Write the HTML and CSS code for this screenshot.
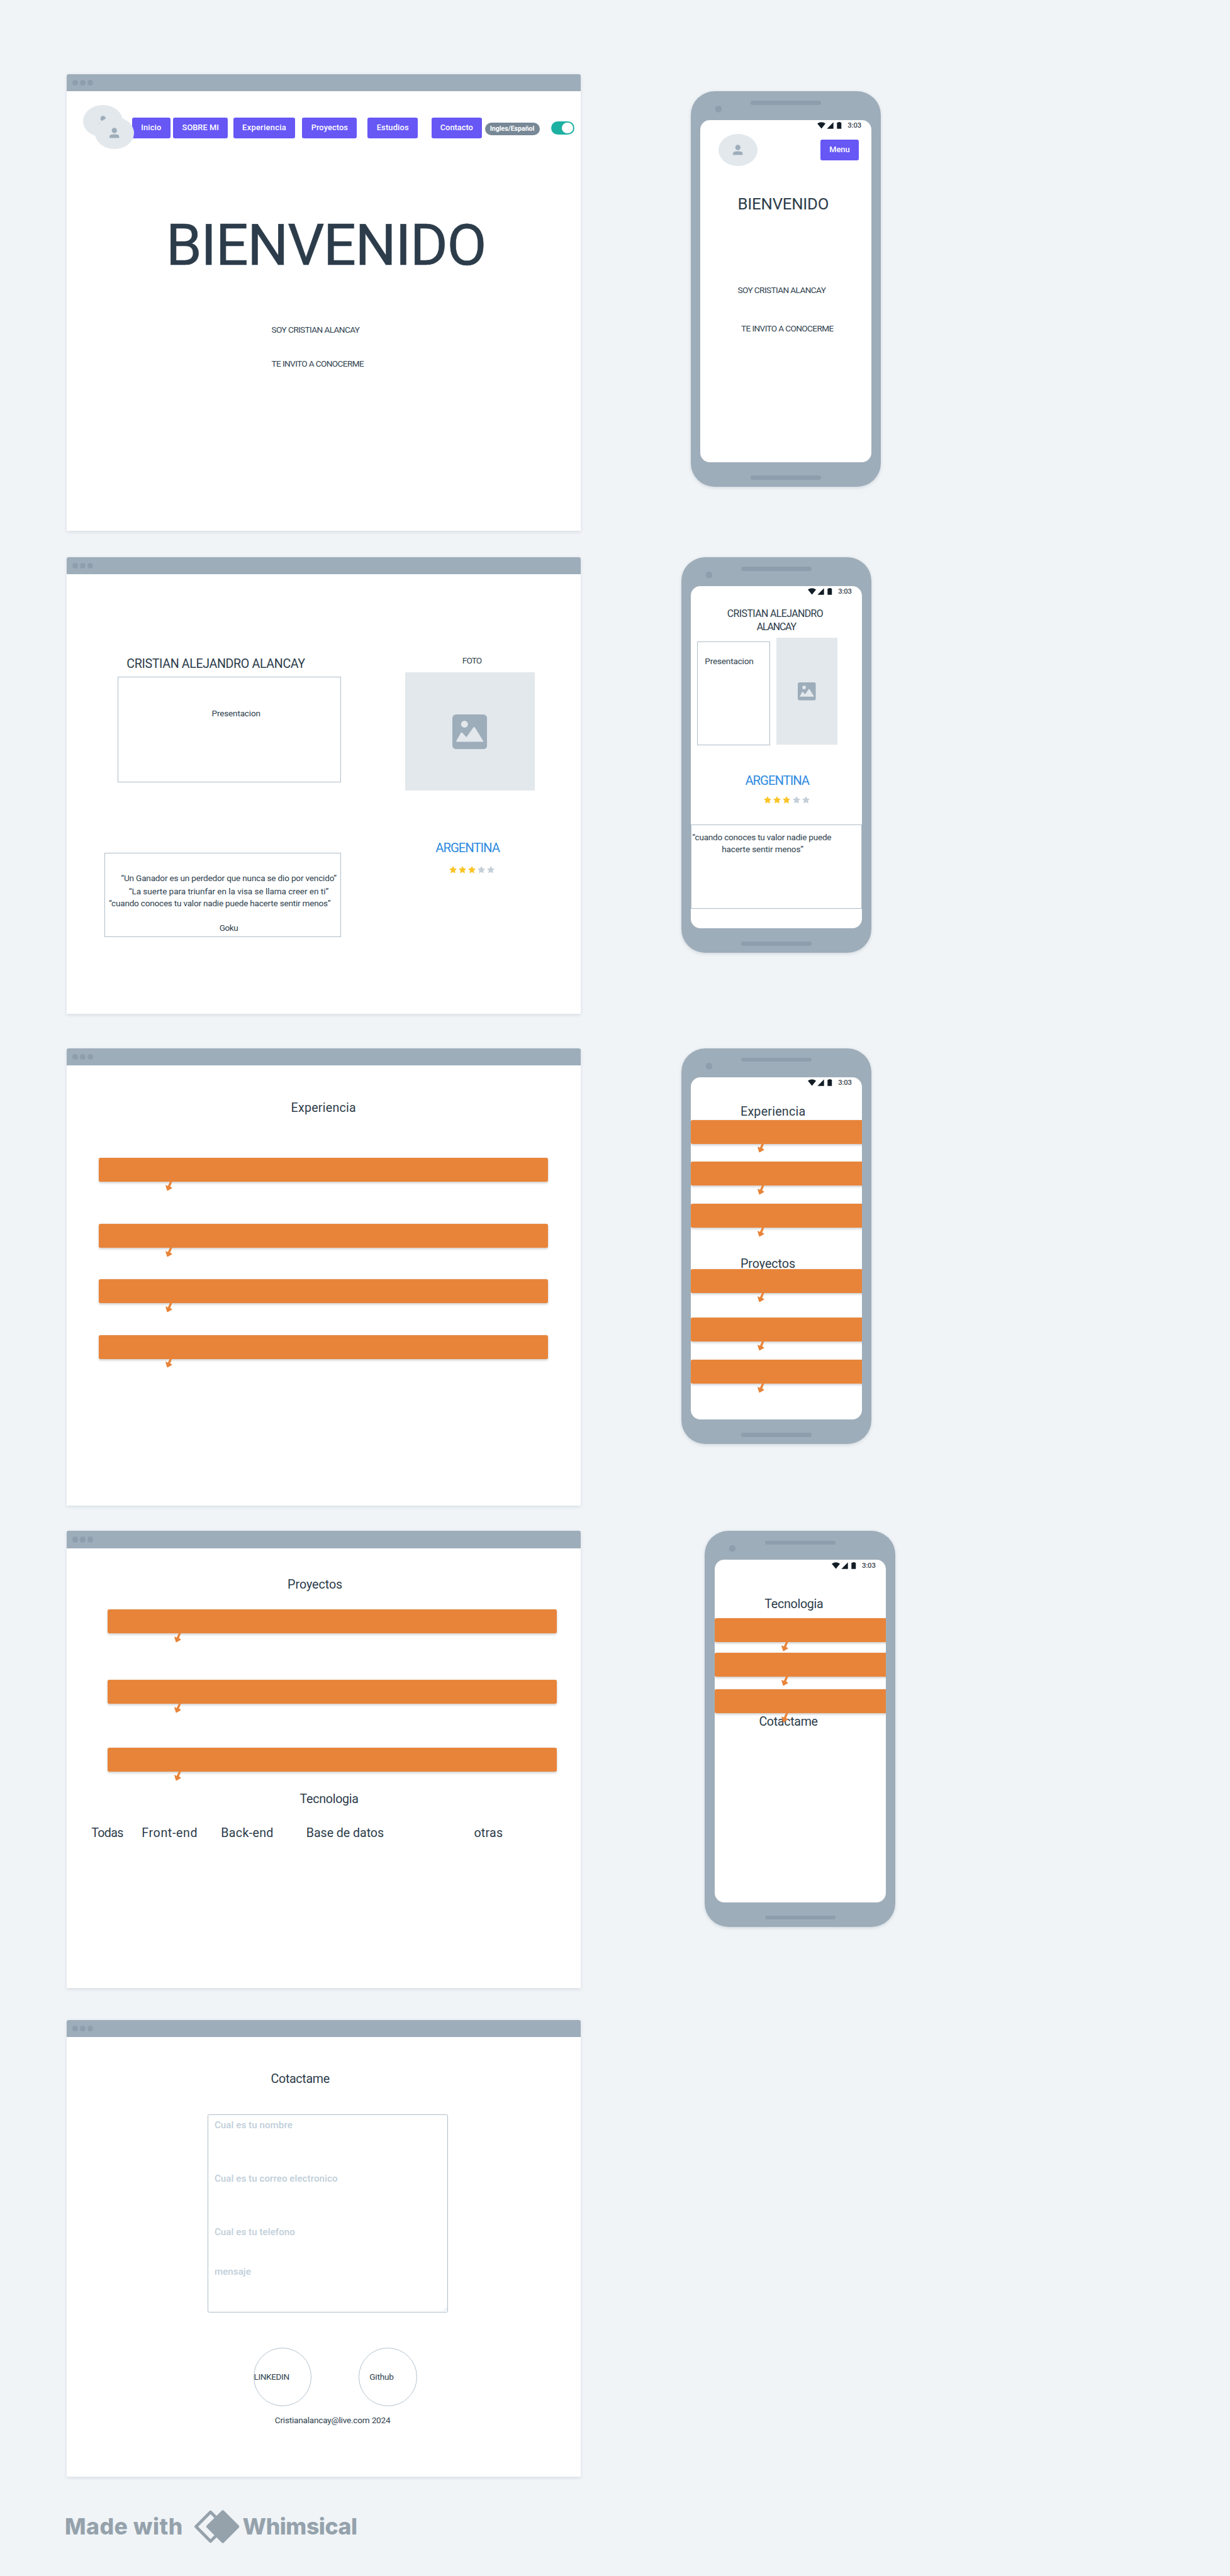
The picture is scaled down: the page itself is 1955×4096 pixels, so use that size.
FILE: index.html
```html
<!DOCTYPE html>
<html lang="es">
<head>
<meta charset="utf-8">
<title>Wireframe portfolio</title>
<link rel="stylesheet" href="styles.css">
</head>
<body>
<svg class="defs" aria-hidden="true">
  <symbol id="arrow" viewBox="0 0 14.4 19.4"><path fill="#e88439" d="M9.3 0H14L9.9 10.3l3.7 2.3q1 .7 0 1.4l-8.8 4.9q-1.200.5-1.600-.7L.1 8Q-.1 6.700 1.200 7.200l4 1.700z"/></symbol>
  <symbol id="star" viewBox="0 0 16 16"><path d="M8 .6q.5 0 .8.6l1.700 3.900 4.300.4q1.100.2.4 1.100L12 9.500l1 4.600q.1 1.100-.9.700L8 12.600l-4.100 2.200q-1 .4-.9-.7l1-4.600L.8 6.600q-.7-.9.400-1.100l4.300-.4 1.700-3.900Q7.500.6 8 .6z"/></symbol>
  <symbol id="status" viewBox="0 0 52 15"><path fill="#121d26" d="M0 3.300Q8.700-2.600 17.300 3.300L8.700 13.900zM34 .3v14H20.300zM44.500 0h3.600v1h2q.5 0 .5.500v12.800h-9.200V1.500q0-.5.500-.5h2.600z"/></symbol>
  <symbol id="person" viewBox="0 0 20.600 22"><ellipse fill="#9eadba" cx="10.300" cy="6" rx="5.500" ry="5.700"/><path fill="#9eadba" d="M0 21.800v-3.300q0-4.600 10.300-4.600t10.300 4.600v3.300z"/></symbol>
  <symbol id="picture" viewBox="0 0 73 73"><rect fill="#9eadba" width="73" height="73" rx="8"/><circle fill="#e2e8ec" cx="25.500" cy="20.500" r="7.200"/><path fill="#e2e8ec" d="M8.300 56L18 38.500q1.300-1.800 2.700 0L29.500 48 44.300 27.200q1.500-1.800 2.900 0L65 56q.6 1.500-.8 1.500H9Q7.600 57.500 8.300 56z"/></symbol>
</svg>
<main class="board">
  <div class="desktop">
    <section class="window w1">
      <header class="bar"><i></i><i></i><i></i></header>
      <div class="body">
        <nav class="nav">
          <div class="avatars">
            <div class="avatar back"><svg><use href="#person"/></svg></div>
            <div class="avatar front"><svg><use href="#person"/></svg></div>
          </div>
          <a class="btn b-inicio">Inicio</a>
          <a class="btn b-sobre">SOBRE MI</a>
          <a class="btn b-exp">Experiencia</a>
          <a class="btn b-proy">Proyectos</a>
          <a class="btn b-est">Estudios</a>
          <a class="btn b-cont">Contacto</a>
          <span class="pill">Ingles/Español</span>
          <span class="toggle"><i></i></span>
        </nav>
        <h1 class="hero">BIENVENIDO</h1>
        <p class="s soy">SOY CRISTIAN ALANCAY</p>
        <p class="s invito">TE INVITO A CONOCERME</p>
      </div>
    </section>

    <section class="window w2">
      <header class="bar"><i></i><i></i><i></i></header>
      <div class="body split">
        <div class="col about">
          <h2 class="h name">CRISTIAN ALEJANDRO ALANCAY</h2>
          <div class="box intro"><p class="s present">Presentacion</p></div>
          <div class="box quotes">
            <p class="s q1">“Un Ganador es un perdedor que nunca se dio por vencido”</p>
            <p class="s q2">“La suerte para triunfar en la visa se llama creer en ti”</p>
            <p class="s q3">“cuando conoces tu valor nadie puede hacerte sentir menos”</p>
            <p class="s q4">Goku</p>
          </div>
        </div>
        <div class="col photo">
          <p class="s foto">FOTO</p>
          <div class="image"><svg><use href="#picture"/></svg></div>
          <p class="country">ARGENTINA</p>
          <div class="stars"><svg><use href="#star"/></svg><svg><use href="#star"/></svg><svg><use href="#star"/></svg><svg class="off"><use href="#star"/></svg><svg class="off"><use href="#star"/></svg></div>
        </div>
      </div>
    </section>

    <section class="window w3">
      <header class="bar"><i></i><i></i><i></i></header>
      <div class="body">
        <h2 class="h exp">Experiencia</h2>
        <div class="strip"><svg><use href="#arrow"/></svg></div>
        <div class="strip"><svg><use href="#arrow"/></svg></div>
        <div class="strip"><svg><use href="#arrow"/></svg></div>
        <div class="strip"><svg><use href="#arrow"/></svg></div>
      </div>
    </section>

    <section class="window w4">
      <header class="bar"><i></i><i></i><i></i></header>
      <div class="body">
        <h2 class="h proy">Proyectos</h2>
        <div class="strip"><svg><use href="#arrow"/></svg></div>
        <div class="strip"><svg><use href="#arrow"/></svg></div>
        <div class="strip"><svg><use href="#arrow"/></svg></div>
        <h2 class="h tec">Tecnologia</h2>
        <div class="tabs">
          <span class="h t-todas">Todas</span>
          <span class="h t-front">Front-end</span>
          <span class="h t-back">Back-end</span>
          <span class="h t-base">Base de datos</span>
          <span class="h t-otras">otras</span>
        </div>
      </div>
    </section>

    <section class="window w5">
      <header class="bar"><i></i><i></i><i></i></header>
      <div class="body">
        <h2 class="h cot">Cotactame</h2>
        <div class="box form">
          <p>Cual es tu nombre</p>
          <p>Cual es tu correo electronico</p>
          <p>Cual es tu telefono</p>
          <p class="msg">mensaje</p>
          <svg class="grip" viewBox="0 0 10 10"><path d="M1 9l8-8M5.500 9L9 5.500" fill="none" stroke="#c5d2de" stroke-width="1"/></svg>
        </div>
        <div class="social">
          <div class="circle linkedin"><p class="s">LINKEDIN</p></div>
          <div class="circle github"><p class="s">Github</p></div>
        </div>
        <p class="s mail">Cristianalancay@live.com 2024</p>
      </div>
    </section>

    <footer class="credit">
      <span class="made">Made with</span>
      <svg class="logo" viewBox="0 0 96 70"><path d="M4.600 35L35.200 4.300 65.800 35 35.200 65.700z" fill="none" stroke="#95a2ac" stroke-width="6.300" stroke-linejoin="round"/><path d="M30 35L61 4 92 35 61 66z" fill="#95a2ac" stroke="#95a2ac" stroke-width="7" stroke-linejoin="round"/></svg>
      <span class="brand">Whimsical</span>
    </footer>
  </div>

  <div class="mobile">
    <section class="phone p1">
      <div class="screen">
        <div class="status"><svg><use href="#status"/></svg><span>3:03</span></div>
        <div class="top">
          <div class="avatar"><svg><use href="#person"/></svg></div>
          <a class="btn menu">Menu</a>
        </div>
        <h1 class="welcome">BIENVENIDO</h1>
        <p class="s soy">SOY CRISTIAN ALANCAY</p>
        <p class="s invito">TE INVITO A CONOCERME</p>
      </div>
    </section>

    <section class="phone p2">
      <div class="screen">
        <div class="status"><svg><use href="#status"/></svg><span>3:03</span></div>
        <p class="m n1">CRISTIAN ALEJANDRO</p>
        <p class="m n2">ALANCAY</p>
        <div class="pair">
          <div class="box intro"><p class="s present">Presentacion</p></div>
          <div class="image"><svg><use href="#picture"/></svg></div>
        </div>
        <p class="country">ARGENTINA</p>
        <div class="stars"><svg><use href="#star"/></svg><svg><use href="#star"/></svg><svg><use href="#star"/></svg><svg class="off"><use href="#star"/></svg><svg class="off"><use href="#star"/></svg></div>
        <div class="box quotes">
          <p class="s l1">“cuando conoces tu valor nadie puede</p>
          <p class="s l2">hacerte sentir menos”</p>
        </div>
      </div>
    </section>

    <section class="phone p3">
      <div class="screen">
        <div class="status"><svg><use href="#status"/></svg><span>3:03</span></div>
        <h2 class="h exp">Experiencia</h2>
        <div class="strip"><svg><use href="#arrow"/></svg></div>
        <div class="strip"><svg><use href="#arrow"/></svg></div>
        <div class="strip"><svg><use href="#arrow"/></svg></div>
        <h2 class="h proy">Proyectos</h2>
        <div class="strip"><svg><use href="#arrow"/></svg></div>
        <div class="strip"><svg><use href="#arrow"/></svg></div>
        <div class="strip"><svg><use href="#arrow"/></svg></div>
      </div>
    </section>

    <section class="phone p4">
      <div class="screen">
        <div class="status"><svg><use href="#status"/></svg><span>3:03</span></div>
        <h2 class="h tec">Tecnologia</h2>
        <div class="strip"><svg><use href="#arrow"/></svg></div>
        <div class="strip"><svg><use href="#arrow"/></svg></div>
        <div class="strip"><svg><use href="#arrow"/></svg></div>
        <h2 class="h cot">Cotactame</h2>
      </div>
    </section>
  </div>
</main>
</body>
</html>
```
FILE: styles.css
```css
/* 1rem is ten units of the board; the board is 258.4rem wide */
html { font-size: 7.56579px; background: #f0f4f7; }
* { box-sizing: border-box; }
body, h1, h2, p { margin: 0; font-weight: 400; }
body { font-family: Roboto, "Liberation Sans", sans-serif; color: #2c3c4a; background: #f0f4f7; }
svg { display: block; flex: none; overflow: visible; }
.defs { display: none; }

.board { display: flex; align-items: flex-start; width: 258.4rem; height: 541.3rem; overflow: hidden; }
.desktop { width: 108rem; margin-left: 13.95rem; flex: none; padding-top: 15.62rem; }
.mobile { flex: none; margin-left: 21.15rem; padding-top: 19.16rem; }

/* Browser windows */
.window { height: 96rem; background: #fff; border-radius: .4rem .4rem 0 0; box-shadow: 0 .2rem .7rem rgba(60, 80, 100, .13); }
.w2 { margin-top: 5.43rem; }
.w3 { margin-top: 7.32rem; }
.w4 { margin-top: 5.4rem; }
.w5 { margin-top: 6.73rem; }
.bar { display: flex; align-items: center; gap: .4rem; height: 3.6rem; padding-left: 1.2rem; background: #9eadba; border-radius: .4rem .4rem 0 0; }
.bar i { width: 1.2rem; height: 1.2rem; border-radius: 50%; background: #8f9eac; }
.body, .col, .screen, .quotes { display: flex; flex-direction: column; align-items: flex-start; }
.body.split { flex-direction: row; }
.col > *, .body > *, .screen > * { flex: none; }

/* Text sizes */
.s, .h, .m, .country, .hero, .welcome { position: relative; top: .05rem; line-height: 1; white-space: nowrap; }
.s, .h, .m, .country, .hero, .welcome { position: static; }
.s { font-size: 1.8rem; color: #2f3f4e; }
.m { font-size: 2.1rem; }
.h { font-size: 2.6rem; }
.country { font-size: 2.7rem; color: #2f8be0; letter-spacing: -.143rem; }

/* Shared pieces */
.btn { display: flex; align-items: center; justify-content: center; flex: none; height: 4.25rem; border-radius: .4rem; background: #6757f5; color: #fff; font-size: 1.7rem; font-weight: 500; line-height: 1; white-space: nowrap; }
.avatar { display: flex; justify-content: center; width: 8.25rem; height: 6.75rem; padding-top: 2.25rem; border-radius: 50%; background: #e2e8ec; }
.avatar svg { width: 2.06rem; height: 2.2rem; }
.box { border: .2rem solid #aebdc9; }
.image { display: flex; align-items: center; justify-content: center; background: #e2e8ec; }
.stars { display: flex; gap: .4rem; color: #fbc427; }
.stars svg { width: 1.6rem; height: 1.6rem; fill: currentColor; }
.stars .off { color: #c5cfd8; }
.strip { position: relative; height: 5.02rem; border-radius: .35rem; background: #e88439; box-shadow: 0 .2rem .5rem rgba(0, 0, 0, .2); }
.strip svg { position: absolute; left: 14rem; top: 5rem; width: 1.44rem; height: 1.94rem; }

/* Home window */
.nav { display: flex; align-items: center; height: 9.24rem; margin: 2.88rem 0 0 3.53rem; }
.nav .btn { margin-top: .37rem; }
.avatars { position: relative; z-index: 1; width: 10.67rem; height: 9.24rem; margin-right: -.39rem; flex: none; }
.front { position: absolute; right: 0; bottom: 0; }
.b-inicio { width: 8rem; letter-spacing: .02rem; }
.b-sobre { width: 11.5rem; margin-left: .62rem; }
.b-exp { width: 12.93rem; margin-left: 1.18rem; letter-spacing: .04rem; }
.b-proy { width: 11.5rem; margin-left: 1.5rem; letter-spacing: .01rem; }
.b-est { width: 10.5rem; margin-left: 2.27rem; letter-spacing: .02rem; }
.b-cont { width: 10.63rem; margin-left: 2.87rem; }
.pill { display: flex; align-items: center; justify-content: center; flex: none; width: 11.5rem; height: 2.65rem; margin: .74rem 0 0 .6rem; border-radius: 1.33rem; background: #788896; color: #fff; font-size: 1.4rem; font-weight: 700; line-height: 1; }
.toggle { display: flex; align-items: center; justify-content: flex-end; flex: none; width: 4.78rem; height: 2.84rem; margin: .4rem 0 0 2.49rem; padding-right: .25rem; border-radius: 1.42rem; background: #1db1a1; }
.toggle i { width: 2.3rem; height: 2.3rem; border-radius: 50%; background: #fff; }
.hero { margin: 14.18rem 0 0 20.91rem; font-size: 12.1rem; letter-spacing: -.192rem; -webkit-text-stroke: .08rem currentColor; }
.soy { letter-spacing: -.08rem; }
.invito { letter-spacing: -.083rem; }
.w1 .soy { margin: 10.87rem 0 0 43.1rem; }
.w1 .invito { margin: 5.31rem 0 0 43.1rem; }

/* About window */
.about { width: 57.67rem; }
.name { margin: 17.57rem 0 0 12.66rem; letter-spacing: -.05rem; }
.w2 .intro { width: 46.93rem; height: 22.28rem; margin: 1.37rem 0 0 10.74rem; padding: 6.77rem 0 0 19.66rem; }
.present { letter-spacing: -.026rem; }
.w2 .quotes { width: 49.71rem; height: 17.75rem; margin: 14.74rem 0 0 7.96rem; }
.q1 { margin: 4.4rem 0 0 3.38rem; letter-spacing: -.026rem; }
.q2 { margin: .99rem 0 0 5.02rem; letter-spacing: -.009rem; }
.q3 { margin: .62rem 0 0 .81rem; letter-spacing: -.031rem; }
.q4 { margin: 3.46rem 0 0 24.04rem; letter-spacing: -.055rem; }
.foto { margin: 17.4rem 0 0 25.5rem; letter-spacing: -.12rem; }
.w2 .image { width: 27.22rem; height: 24.88rem; margin: 1.45rem 0 0 13.5rem; }
.w2 .image svg { width: 7.3rem; height: 7.3rem; }
.w2 .country { margin: 10.67rem 0 0 19.88rem; }
.w2 .stars { margin: 2.4rem 0 0 22.73rem; }

/* Experience window */
.exp { letter-spacing: .031rem; }
.w3 .exp { margin: 7.57rem 0 0 47.19rem; }
.w3 .strip { width: 94.36rem; margin: 6.65rem 0 0 6.8rem; }
.w3 .strip:nth-child(2) { margin-top: 9.23rem; }
.w3 .strip:nth-child(3) { margin-top: 8.83rem; }

/* Projects window */
.proy { letter-spacing: -.005rem; }
.tec { letter-spacing: -.038rem; }
.w4 .proy { margin: 6.35rem 0 0 46.47rem; }
.w4 .strip { width: 94.43rem; margin: 3.95rem 0 0 8.6rem; }
.w4 .strip:nth-child(3) { margin-top: 9.78rem; }
.w4 .strip:nth-child(4) { margin-top: 9.21rem; }
.w4 .tec { margin: 4.49rem 0 0 49.04rem; }
.tabs { display: grid; grid-template-columns: 10.59rem 16.64rem 17.93rem 35.24rem auto; margin: 4.59rem 0 0 5.24rem; }
.t-todas { letter-spacing: -.092rem; }
.t-front { letter-spacing: .08rem; }
.t-back { letter-spacing: .043rem; }
.t-base { letter-spacing: -.009rem; }
.t-otras { letter-spacing: .031rem; }

/* Contact window */
.cot { letter-spacing: -.043rem; }
.w5 .cot { margin: 7.61rem 0 0 42.96rem; }
.form { position: relative; width: 50.53rem; height: 41.7rem; margin: 6.01rem 0 0 29.64rem; padding: .9rem 0 0 1.34rem; border-radius: .3rem; color: #c0ced9; font-size: 2rem; font-weight: 500; line-height: 2.8rem; letter-spacing: .008rem; }
.form p { margin-bottom: 8.4rem; font-weight: 500; }
.form .msg { margin: -2.8rem 0 0; }
.grip { position: absolute; right: 0; bottom: 0; width: 1rem; height: 1rem; }
.social { display: flex; gap: 9.89rem; margin: 7.42rem 0 0 39.3rem; }
.circle { display: flex; align-items: center; width: 12.23rem; height: 12.23rem; border: .2rem solid #b3c2ce; border-radius: 50%; }
.linkedin .s { margin-left: -.05rem; letter-spacing: -.052rem; }
.github .s { margin-left: 2.12rem; letter-spacing: -.027rem; }
.mail { margin: 2.15rem 0 0 43.79rem; letter-spacing: -.029rem; }

/* Credit line */
.credit { display: flex; align-items: center; height: 7rem; margin-top: 7.03rem; color: #95a2ac; font: 800 4.7rem/1 Inter, "Open Sans", sans-serif; white-space: nowrap; }
.made { width: 27.15rem; margin-left: -.35rem; letter-spacing: .07rem; }
.logo { width: 9.6rem; height: 7rem; }
.brand { margin-left: .6rem; letter-spacing: -.06rem; }

/* Phones */
.phone { position: relative; width: 40rem; height: 83.2rem; padding: 6.03rem 2rem 0; border-radius: 5rem; background: #9eadba; box-shadow: 0 .2rem .7rem rgba(60, 80, 100, .16); }
.phone::before, .phone::after { content: ""; position: absolute; left: 12.6rem; top: 2rem; width: 14.8rem; height: .85rem; border-radius: .43rem; background: #8f9eac; }
.phone::after { top: 80.8rem; }
.screen { position: relative; height: 72rem; overflow: hidden; border-radius: 2rem; background: #fff; }
.p1 { margin-left: 2rem; }
.p2 { margin-top: 14.75rem; }
.p3 { margin-top: 20.02rem; }
.p4 { margin: 18.25rem 0 0 5rem; }
.phone { background-image: radial-gradient(circle at 5.8rem 3.73rem, #8f9eac .68rem, transparent .74rem); }
.status { display: flex; align-items: flex-start; align-self: flex-end; gap: 1.17rem; height: 2rem; padding: .47rem 2.15rem 0 0; font-size: 1.5rem; font-weight: 500; line-height: 1; letter-spacing: -.02rem; color: #3c4650; }
.status svg { width: 5.2rem; height: 1.5rem; }
.top { display: flex; align-items: center; margin: .97rem 0 0 3.8rem; }
.menu { width: 8.17rem; margin-left: 13.15rem; }
.welcome { margin: 6.37rem 0 0 7.88rem; font-size: 3.4rem; letter-spacing: -.028rem; }
.p1 .soy { margin: 15.53rem 0 0 7.89rem; }
.p1 .invito { margin: 6.25rem 0 0 8.62rem; }
.n1 { margin: 2.8rem 0 0 7.68rem; letter-spacing: -.077rem; }
.n2 { margin: .67rem 0 0 13.87rem; letter-spacing: -.15rem; }
.pair { display: flex; align-items: flex-start; margin: 1.25rem 0 0 1.4rem; }
.p2 .intro { width: 15.3rem; height: 21.8rem; margin-top: .8rem; padding: 3.12rem 0 0 1.45rem; }
.p2 .image { width: 12.9rem; height: 22.5rem; margin: 0 0 .1rem 1.28rem; }
.p2 .image svg { width: 3.8rem; height: 3.8rem; }
.p2 .country { margin: 6rem 0 0 11.45rem; }
.p2 .stars { margin: 2.02rem 0 0 15.4rem; }
.p2 .quotes { width: 36rem; height: 17.74rem; margin-top: 4.33rem; }
.l1 { margin: 1.72rem 0 0 .21rem; letter-spacing: -.032rem; }
.l2 { margin: .64rem 0 0 6.4rem; letter-spacing: -.02rem; }
.phone .strip { width: 40rem; margin-top: 3.78rem; }
.p3 .exp { margin: 3.99rem 0 0 10.47rem; }
.p3 .exp + .strip { margin-top: .41rem; }
.p3 .proy { margin: 6.44rem 0 0 10.47rem; }
.p3 .proy + .strip { margin-top: -.22rem; }
.p3 .proy + .strip + .strip { margin-top: 5.16rem; }
.p4 .tec { margin: 6.04rem 0 0 10.54rem; }
.p4 .tec + .strip { margin-top: 1.7rem; }
.p4 .tec + .strip + .strip { margin-top: 2.19rem; }
.p4 .tec + .strip + .strip + .strip { margin-top: 2.68rem; }
.p4 .cot { margin: .51rem 0 0 9.36rem; }
```
